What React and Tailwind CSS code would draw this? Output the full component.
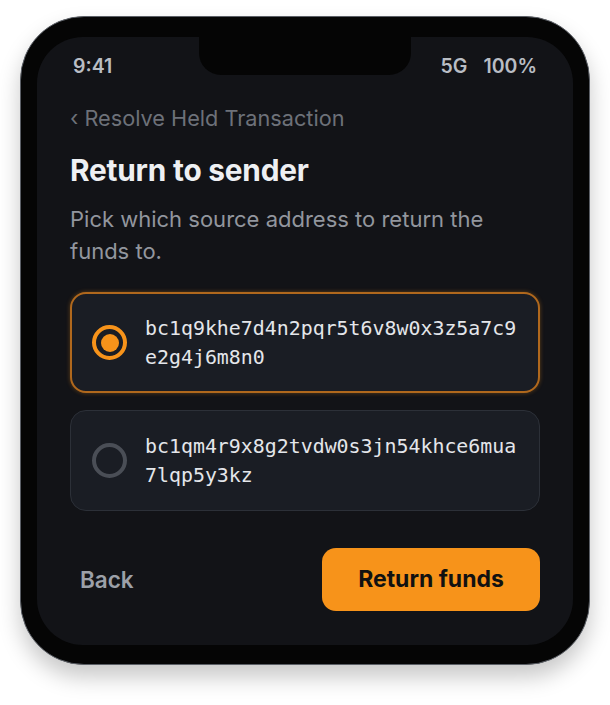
import { useState } from 'react';

const addresses = [
    { id: 'a', line1: 'bc1q9khe7d4n2pqr5t6v8w0x3z5a7c9', line2: 'e2g4j6m8n0' },
    { id: 'b', line1: 'bc1qm4r9x8g2tvdw0s3jn54khce6mua', line2: '7lqp5y3kz' },
];

const Radio = ({ checked }) => (
    <span
        className={`flex h-[35px] w-[35px] shrink-0 items-center justify-center rounded-full border-[4px] ${
            checked ? 'border-[#f7931a]' : 'border-[#4a4e56]'
        }`}
    >
        {checked && <span className="h-[18px] w-[18px] rounded-full bg-[#f7931a]" />}
    </span>
);

const App = () => {
    const [selected, setSelected] = useState('a');

    return (
        <div className="min-h-[705px] bg-white pt-[16px] font-['Inter','Noto_Sans',sans-serif]">
            <div className="mx-auto h-[649px] w-[570px] rounded-[64px] border border-[#5b5f66] bg-[#050505] px-[16px] pb-[19px] pt-[20px] shadow-[0_12px_22px_rgba(0,0,0,0.22)]">
                <div className="relative h-full overflow-hidden rounded-[46px] bg-[#121317] px-[33px]">
                    {/* notch */}
                    <div className="absolute left-1/2 top-0 h-[38px] w-[212px] -translate-x-1/2 rounded-b-[22px] bg-[#050505]" />

                    {/* status bar */}
                    <div className="flex justify-between px-[3px] pt-[18px] text-[19.5px] font-semibold leading-[22px] text-[#b9bdc4]">
                        <span>9:41</span>
                        <span className="flex gap-[16px]">
                            <span>5G</span>
                            <span>100%</span>
                        </span>
                    </div>

                    <div className="mt-[27px] text-[21.7px] leading-[28px] text-[#6d7179]">
                        ‹ Resolve Held Transaction
                    </div>

                    <h1 className="mt-[21px] text-[29.8px] font-bold leading-[34px] tracking-[-0.2px] text-[#eef0f3]">
                        Return to sender
                    </h1>

                    <p className="mt-[16px] max-w-[440px] text-[22px] leading-[32px] text-[#92969e]">
                        Pick which source address to return the funds to.
                    </p>

                    <div className="mt-[25px] flex flex-col gap-[17px]">
                        {addresses.map((addr) => {
                            const checked = selected === addr.id;
                            return (
                                <button
                                    key={addr.id}
                                    onClick={() => setSelected(addr.id)}
                                    className={`flex h-[101px] items-center gap-[18px] rounded-[16px] bg-[#1a1d24] text-left ${
                                        checked
                                            ? 'border-2 border-[#b0681d] pl-[20px] shadow-[0_0_4px_rgba(247,147,26,0.35)]'
                                            : 'border border-[#2c3038] pl-[21px]'
                                    }`}
                                >
                                    <Radio checked={checked} />
                                    <span className="font-['DejaVu_Sans_Mono',monospace] text-[19.9px] leading-[29px] text-[#e4e6ea]">
                                        {addr.line1}
                                        <br />
                                        {addr.line2}
                                    </span>
                                </button>
                            );
                        })}
                    </div>

                    <div className="mt-[37px] flex items-center justify-between">
                        <button className="ml-[10px] text-[22.5px] font-semibold text-[#9ca0a8]">Back</button>
                        <button className="h-[63px] w-[218px] rounded-[14px] bg-[#f7931a] text-[23px] font-bold text-[#111111]">
                            Return funds
                        </button>
                    </div>
                </div>
            </div>
        </div>
    );
};

export default App;
